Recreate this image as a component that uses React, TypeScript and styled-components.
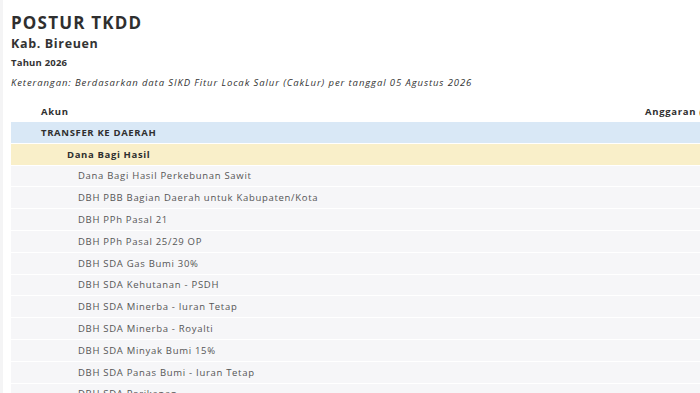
import styled, { createGlobalStyle } from 'styled-components'

const GlobalStyle = createGlobalStyle`
  html, body {
    margin: 0;
    padding: 0;
    background: #f4f4f5;
    overflow: hidden;
  }
  body {
    font-family: "Open Sans", "Noto Sans", sans-serif;
  }
`

const rows = [
  'Dana Bagi Hasil Perkebunan Sawit',
  'DBH PBB Bagian Daerah untuk Kabupaten/Kota',
  'DBH PPh Pasal 21',
  'DBH PPh Pasal 25/29 OP',
  'DBH SDA Gas Bumi 30%',
  'DBH SDA Kehutanan - PSDH',
  'DBH SDA Minerba - Iuran Tetap',
  'DBH SDA Minerba - Royalti',
  'DBH SDA Minyak Bumi 15%',
  'DBH SDA Panas Bumi - Iuran Tetap',
  'DBH SDA Perikanan',
]

export default function App() {
  return (
    <Page>
      <GlobalStyle />
      <Title>POSTUR TKDD</Title>
      <Region>Kab. Bireuen</Region>
      <Year>Tahun 2026</Year>
      <Note>
        Keterangan: Berdasarkan data SIKD Fitur Locak Salur (CakLur) per tanggal 05 Agustus 2026
      </Note>
      <Table>
        <HeadRow>
          <HeadCell>Akun</HeadCell>
          <HeadCell>Anggaran (Rp)</HeadCell>
        </HeadRow>
        <Row $bg="#d9e8f6">
          <Cell $indent={30} $bold>TRANSFER KE DAERAH</Cell>
          <Cell />
        </Row>
        <Row $bg="#f9efc9">
          <Cell $indent={56} $bold>Dana Bagi Hasil</Cell>
          <Cell />
        </Row>
        {rows.map((r) => (
          <Row key={r} $bg="#f6f6f8">
            <Cell $indent={67} $muted>{r}</Cell>
            <Cell />
          </Row>
        ))}
      </Table>
    </Page>
  )
}

const Page = styled.div`
  margin-left: 3px;
  background: #fff;
  min-height: 393px;
  padding: 12px 0 0 8px;
  box-sizing: border-box;
  width: 760px;
`

const Title = styled.h1`
  margin: 0;
  font-size: 17px;
  font-weight: 700;
  color: #2f2f2f;
  line-height: 22px;
  letter-spacing: 1.2px;
`

const Region = styled.h2`
  margin: 0;
  font-size: 12.5px;
  font-weight: 700;
  color: #333;
  line-height: 20px;
  letter-spacing: 0.65px;
`

const Year = styled.div`
  font-size: 9.5px;
  font-weight: 700;
  color: #333;
  line-height: 18px;
  letter-spacing: 0.2px;
`

const Note = styled.p`
  margin: 3px 0 0;
  font-size: 9.5px;
  font-style: italic;
  color: #333;
  line-height: 16px;
  letter-spacing: 0.9px;
`

const Table = styled.div`
  margin-top: 9px;
  width: 740px;
  display: flex;
  flex-direction: column;
`

const HeadRow = styled.div`
  display: grid;
  grid-template-columns: 634px 1fr;
  height: 22px;
  align-items: center;
`

const HeadCell = styled.div`
  padding-left: 30px;
  font-size: 9.5px;
  font-weight: 700;
  color: #2f2f2f;
  white-space: nowrap;
  letter-spacing: 0.7px;
  &:last-child {
    padding-left: 0;
  }
`

const Row = styled.div<{ $bg: string }>`
  display: grid;
  grid-template-columns: 634px 1fr;
  height: 21.8px;
  align-items: center;
  background: ${(p) => p.$bg};
  border-bottom: 1px solid #fff;
  box-sizing: border-box;
`

const Cell = styled.div<{ $indent?: number; $bold?: boolean; $muted?: boolean }>`
  padding-left: ${(p) => p.$indent ?? 0}px;
  font-size: 9.5px;
  font-weight: ${(p) => (p.$bold ? 700 : 400)};
  color: ${(p) => (p.$muted ? '#555' : '#2f2f2f')};
  white-space: nowrap;
  letter-spacing: ${(p) => (p.$bold ? '0.65px' : '0.7px')};
`
